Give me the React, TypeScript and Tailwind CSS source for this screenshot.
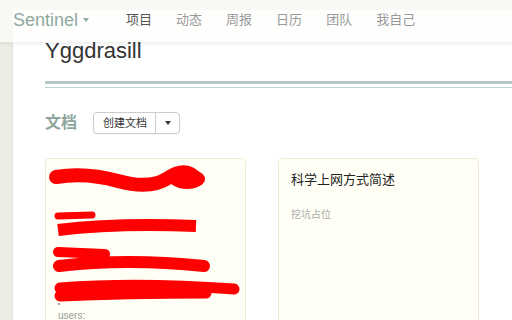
const navItems = ["项目", "动态", "周报", "日历", "团队", "我自己"]

function Caret({ color = "border-t-[#8fa99f]", size = "border-x-[3px] border-t-[4px]" }: { color?: string; size?: string }) {
  return <span className={`inline-block h-0 w-0 border-x-transparent ${size} ${color}`} />
}

function Redacted() {
  // red marker scribbles over the first doc's text
  return (
    <svg width="199" height="150" viewBox="0 0 199 150" className="block">
      <g fill="none" stroke="#ff0000" strokeLinecap="round" strokeLinejoin="round">
        <path d="M10 18 Q40 13 72 22 T122 19 T150 20" strokeWidth="14" />
        <path d="M12 57 L46 56" strokeWidth="7" />
        <path d="M12 71 Q70 64 150 67" strokeWidth="12" strokeLinecap="butt" />
        <path d="M12 93 L59 95" strokeWidth="10" />
        <path d="M13 107 Q80 99 158 107" strokeWidth="12" />
        <path d="M14 129 Q90 123 188 130" strokeWidth="11" />
        <path d="M14 137 Q80 134 160 134" strokeWidth="11" />
      </g>
      <ellipse cx="141" cy="20" rx="18" ry="10" fill="#ff0000" />
      <circle cx="13" cy="145" r="1" fill="#888" />
    </svg>
  )
}

export default function App() {
  return (
    <div className="h-[320px] overflow-hidden bg-[#eceee5] font-['Liberation_Sans','Noto_Sans_CJK_SC',sans-serif]">
      <header className="relative z-10 flex h-[42px] items-center pb-[2px] pl-[13px] bg-[linear-gradient(to_bottom,#f8f8f4_10px,transparent_10px),linear-gradient(to_right,#f8f8f4_13px,#fefefd_13px)] shadow-[0_2px_4px_rgba(0,0,0,0.07)]">
        <div className="flex items-center gap-[5px] text-[18px] leading-[22px] text-[#8fa99f]">
          Sentinel
          <Caret />
        </div>
        <nav className="ml-[25px] flex text-[13px] leading-[18px]">
          {navItems.map((item, i) => (
            <span key={item} className={`px-3 ${i === 0 ? "text-[#555]" : "text-[#9a9a9a]"}`}>
              {item}
            </span>
          ))}
        </nav>
      </header>

      <div className="flex h-[278px]">
        <div className="w-[13px] shrink-0" />
        <main className="flex-1 bg-white pl-[32px] shadow-[-1px_0_2px_rgba(0,0,0,0.06)]">
          <h1 className="-mt-[4px] text-[22px] leading-[26px] text-[#333]">Yggdrasill</h1>
          <div className="mt-[17px] h-[7px] border-t-[3px] border-b border-t-[#b8c5c6] border-b-[#c4cfd1]" />

          <div className="mt-[24px] flex items-center">
            <h2 className="text-[16px] font-bold leading-[22px] text-[#8da59c]">文档</h2>
            <div className="ml-[16px] flex h-[22px] rounded-[4px] border border-[#cccccc] bg-white text-[11px] text-[#333] shadow-[0_1px_1px_rgba(0,0,0,0.04)]">
              <span className="flex items-center pl-[9px] pr-[8px]">创建文档</span>
              <span className="flex w-[24px] items-center justify-center border-l border-[#cccccc]">
                <Caret color="border-t-[#333]" size="border-x-[3.5px] border-t-[4px]" />
              </span>
            </div>
          </div>

          <div className="mt-[24px] flex gap-[32px]">
            <div className="h-[200px] w-[201px] shrink-0 rounded-[4px] border border-[#eeebd6] bg-[#fffff6]">
              <Redacted />
              <p className="px-3 text-[10px] leading-[14px] text-[#999]">users:</p>
            </div>
            <div className="h-[200px] w-[201px] shrink-0 rounded-[4px] border border-[#eeebd6] bg-[#fffff6] p-3">
              <h3 className="text-[13px] leading-[18px] text-[#222]">科学上网方式简述</h3>
              <p className="mt-[19px] text-[10px] leading-[14px] text-[#aaa]">挖坑占位</p>
            </div>
          </div>
        </main>
      </div>
    </div>
  )
}
